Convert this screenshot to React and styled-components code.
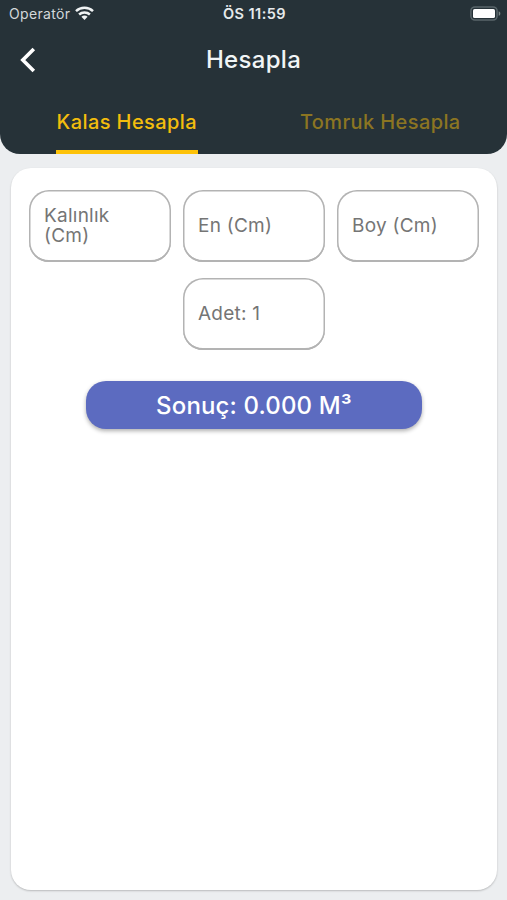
import React from 'react';
import styled, { createGlobalStyle } from 'styled-components';

const GlobalStyle = createGlobalStyle`
  * { box-sizing: border-box; }
  body {
    margin: 0;
    background: #eceef0;
    font-family: Inter, "Liberation Sans", sans-serif;
  }
  button, input { font-family: inherit; }
`;

const Screen = styled.div`
  display: flex;
  flex-direction: column;
  width: 100%;
  height: 900px;
  background: #eceef0;
  overflow: hidden;
`;

const Header = styled.header`
  display: flex;
  flex-direction: column;
  height: 154px;
  flex: none;
  background: #263238;
  border-radius: 0 0 20px 20px;
`;

const StatusBar = styled.div`
  display: grid;
  grid-template-columns: 1fr auto 1fr;
  align-items: center;
  height: 27px;
  padding: 0 6px 0 9px;
  color: #e6eaec;
`;

const Carrier = styled.div`
  display: flex;
  align-items: center;
  gap: 5px;
  font-size: 14px;
  line-height: 18px;
  letter-spacing: 0.35px;
  color: #d3d8da;
`;

const Clock = styled.div`
  margin-left: -1px;
  font-size: 14.5px;
  font-weight: 600;
  line-height: 18px;
  letter-spacing: 0.45px;
`;

const BatterySlot = styled.div`
  display: flex;
  justify-content: flex-end;
`;

const TitleBar = styled.div`
  display: grid;
  grid-template-columns: 56px 1fr 56px;
  align-items: center;
  height: 64px;
`;

const BackButton = styled.button`
  display: flex;
  align-items: center;
  justify-content: center;
  width: 56px;
  height: 56px;
  padding: 2px 1px 0 0;
  border: 0;
  background: none;
`;

const Title = styled.h1`
  margin: 0;
  padding-top: 2px;
  text-align: center;
  font-size: 24px;
  line-height: 30px;
  font-weight: 500;
  letter-spacing: 0.3px;
  color: #f1f5f6;
`;

const Tabs = styled.nav`
  display: grid;
  grid-template-columns: 1fr 1fr;
  justify-items: center;
  flex: 1;
`;

const Tab = styled.button`
  display: flex;
  align-items: center;
  padding: ${p => (p.$active ? '3px 1px 0' : '3px 0 4px')};
  border: 0;
  border-bottom: ${p => (p.$active ? '4px solid #fdc208' : '0')};
  background: none;
  font-size: 20px;
  font-weight: 500;
  line-height: 24px;
  letter-spacing: 0.4px;
  white-space: nowrap;
  color: ${p => (p.$active ? '#f3bd0d' : '#8c7522')};
`;

const Card = styled.main`
  display: flex;
  flex-direction: column;
  align-items: center;
  width: 486px;
  height: 722px;
  margin: 14px 0 0 11px;
  padding-top: 21.5px;
  background: #fff;
  border-radius: 20px;
  box-shadow: 0 1px 2px rgba(0, 0, 0, 0.22);
`;

const Fields = styled.div`
  display: flex;
  flex-wrap: wrap;
  justify-content: center;
  gap: 15.5px 12px;
  width: 460px;
`;

const Field = styled.label`
  display: flex;
  align-items: center;
  width: 142px;
  height: 72.5px;
  padding: 0 14px 0 15px;
  border-radius: 20px;
  box-shadow:
    inset 0 0 0 1.5px #b3b3b3,
    inset 0 -2px 0 #b3b3b3;
  font-size: 19px;
  line-height: 19.5px;
  letter-spacing: 0.25px;
  color: #757575;
`;

const Result = styled.div`
  display: flex;
  align-items: center;
  justify-content: center;
  width: 336px;
  height: 48px;
  margin-top: 30.5px;
  padding-top: 1px;
  border-radius: 20px;
  background: #5c6bc0;
  box-shadow: 0 2px 4px rgba(0, 0, 0, 0.32);
  font-size: 24px;
  font-weight: 500;
  letter-spacing: 0.15px;
  color: #fff;
`;

const WifiIcon = () => (
  <svg width="19" height="15" viewBox="0 0 19 15" fill="none" stroke="#f0f3f4" strokeWidth="2.5">
    <path d="M1 5.1C5.7 .7 13.3 .7 18 5.1" />
    <path d="M4.1 8.5c3-2.8 7.8-2.8 10.8 0" />
    <path d="M9.5 14l-3.1-3.2c1.8-1.6 4.4-1.6 6.2 0z" fill="#f0f3f4" stroke="none" />
  </svg>
);

const BatteryIcon = () => (
  <svg width="31" height="15" viewBox="0 0 31 15">
    <rect x=".9" y=".9" width="26.2" height="13.2" rx="4" fill="none" stroke="#59656a" strokeWidth="1.5" />
    <rect x="3" y="3" width="22" height="9" rx="1.6" fill="#fff" />
    <path d="M28.7 5.2c2.2.8 2.2 3.8 0 4.6z" fill="#7b8686" />
  </svg>
);

const BackIcon = () => (
  <svg width="16" height="26" viewBox="0 0 16 26" fill="none" stroke="#fff" strokeWidth="3.6">
    <path d="M13.8 2L2.8 13l11 11" />
  </svg>
);

const fields = ['Kalınlık (Cm)', 'En (Cm)', 'Boy (Cm)', 'Adet: 1'];

export default function App() {
  return (
    <Screen>
      <GlobalStyle />
      <Header>
        <StatusBar>
          <Carrier>Operatör <WifiIcon /></Carrier>
          <Clock>ÖS 11:59</Clock>
          <BatterySlot><BatteryIcon /></BatterySlot>
        </StatusBar>
        <TitleBar>
          <BackButton aria-label="Geri"><BackIcon /></BackButton>
          <Title>Hesapla</Title>
        </TitleBar>
        <Tabs>
          <Tab $active>Kalas Hesapla</Tab>
          <Tab>Tomruk Hesapla</Tab>
        </Tabs>
      </Header>
      <Card>
        <Fields>
          {fields.map(text => <Field key={text}>{text}</Field>)}
        </Fields>
        <Result>Sonuç: 0.000 M³</Result>
      </Card>
    </Screen>
  );
}
